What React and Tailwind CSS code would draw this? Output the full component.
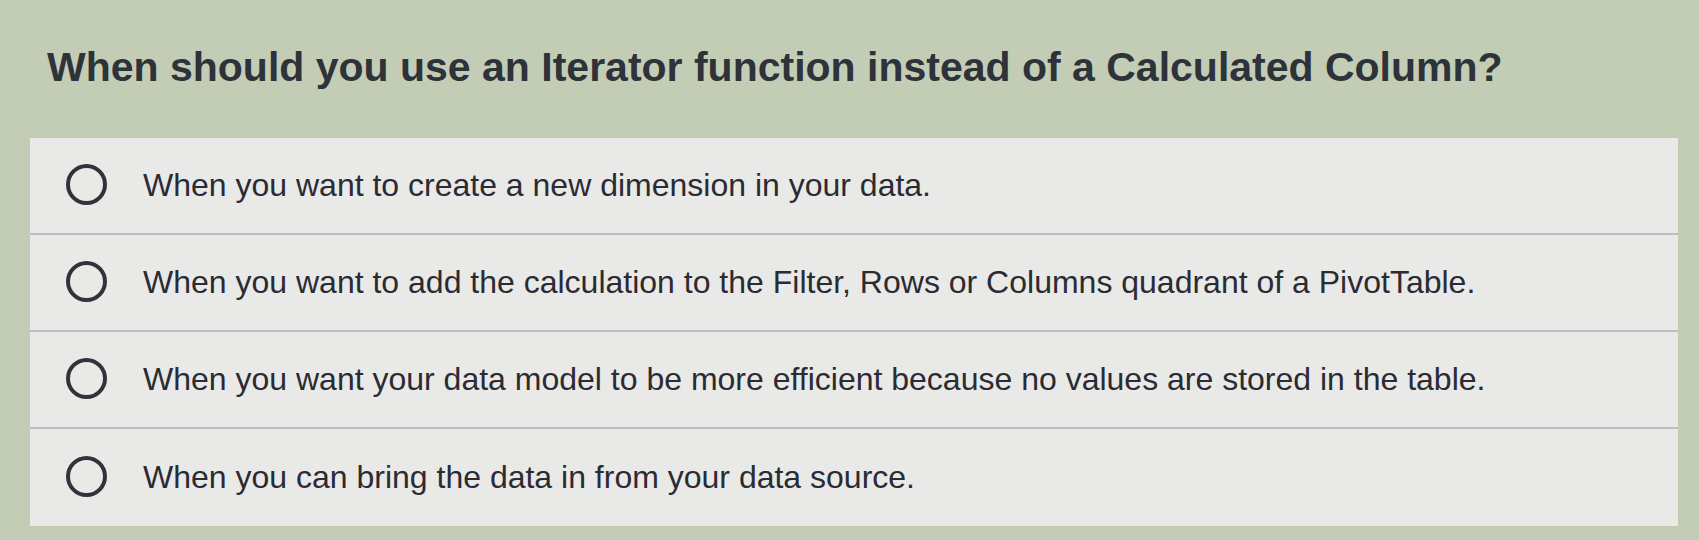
const options = [
  "When you want to create a new dimension in your data.",
  "When you want to add the calculation to the Filter, Rows or Columns quadrant of a PivotTable.",
  "When you want your data model to be more efficient because no values are stored in the table.",
  "When you can bring the data in from your data source.",
];

const Radio = () => (
  <span className="block h-[41px] w-[41px] shrink-0 rounded-full border-4 border-[#31323b]" />
);

export default function App() {
  return (
    <div
      className="h-[540px] w-[1699px] overflow-hidden bg-[#c3ccb5] pt-[43px]"
      style={{ fontFamily: '"Liberation Sans", Arial, sans-serif' }}
    >
      <h1 className="pl-[47px] text-[41px] font-bold leading-[48px] text-[#2e3239]">
        When should you use an Iterator function instead of a Calculated Column?
      </h1>

      <div className="ml-[30px] mt-[47px] w-[1648px] bg-[#e9e9e7]">
        {options.map((text, i) => (
          <div
            key={i}
            className={`flex h-[97px] items-center gap-[36px] pb-[2px] pl-[36px] ${
              i < options.length - 1 ? "border-b-2 border-[#bdbdc3]" : ""
            }`}
          >
            <Radio />
            <span className="text-[32px] leading-none text-[#2b2b33]">{text}</span>
          </div>
        ))}
      </div>
    </div>
  );
}
